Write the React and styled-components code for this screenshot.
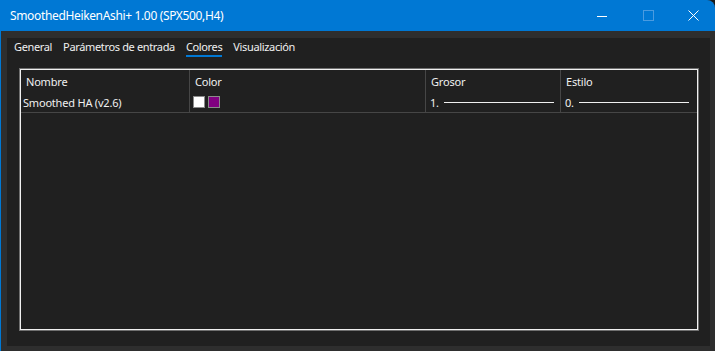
import styled, { createGlobalStyle } from 'styled-components';

const GlobalStyle = createGlobalStyle`
    html, body {
        margin: 0;
        padding: 0;
        background: #1a1a1a;
        font-family: 'Noto Sans', 'Open Sans', sans-serif;
    }
    * {
        box-sizing: border-box;
    }
`;

const Window = styled.div`
    width: 715px;
    height: 351px;
    display: flex;
    flex-direction: column;
    background: #2e2e2e;
    border-left: 1px solid #0078d4;
    border-top-right-radius: 8px;
    overflow: hidden;
`;
const TitleBar = styled.div`
    height: 31px;
    flex: 0 0 31px;
    display: flex;
    align-items: center;
    background: #0078d4;
    color: #ffffff;
`;
const Title = styled.div`
    flex: 1;
    padding-left: 9px;
    font-size: 12px;
    letter-spacing: -0.35px;
`;
const WinButton = styled.div`
    width: ${(p) => p.$w || 46}px;
    height: 31px;
    display: flex;
    align-items: center;
    justify-content: center;
`;
const Frame = styled.div`
    flex: 1;
    padding: 7px 5px 5px 6px;
    display: flex;
`;
const Panel = styled.div`
    flex: 1;
    display: flex;
    flex-direction: column;
    background: #202020;
    padding: 0 11px 15px 12px;
`;
const Tabs = styled.div`
    display: flex;
    gap: 11px;
    height: 19px;
    margin-left: -5px;
`;
const Tab = styled.div`
    font-size: 11px;
    line-height: 16px;
    padding-top: 1px;
    letter-spacing: -0.35px;
    color: #f0f0f0;
    border-bottom: 2px solid ${(p) => (p.$active ? '#0078d4' : 'transparent')};
    height: 19px;
    white-space: nowrap;
`;
const Grid = styled.div`
    flex: 1;
    margin: 12px 1px 1px 1px;
    border: 1px solid #f0f0f0;
    box-shadow: 0 0 0 1px #707070;
    display: flex;
    flex-direction: column;
`;
const Row = styled.div`
    display: grid;
    grid-template-columns: 169px 236px 135px 1fr;
    height: ${(p) => p.$h}px;
    border-bottom: ${(p) => (p.$line ? '1px solid #464646' : 'none')};
`;
const Cell = styled.div`
    display: flex;
    align-items: center;
    gap: ${(p) => p.$gap || 0}px;
    padding-left: ${(p) => p.$pad}px;
    border-right: ${(p) => (p.$last ? 'none' : '1px solid #464646')};
    font-size: 11px;
    letter-spacing: -0.2px;
    color: #f0f0f0;
    white-space: nowrap;
`;
const Swatch = styled.span`
    width: 12px;
    height: 12px;
    border: 1px solid #8a8a8a;
    background: ${(p) => p.$color};
`;
const LineSample = styled.span`
    width: 110px;
    height: 1px;
    background: #f0f0f0;
    margin-left: 5px;
    margin-top: 1px;
`;

function App() {
    return (
        <>
            <GlobalStyle />
            <Window>
                <TitleBar>
                    <Title>SmoothedHeikenAshi+ 1.00 (SPX500,H4)</Title>
                    <WinButton>
                        <svg width="10" height="10" viewBox="0 0 10 10">
                            <path d="M0 5.5H10" stroke="#fff" strokeWidth="1" />
                        </svg>
                    </WinButton>
                    <WinButton>
                        <svg width="11" height="11" viewBox="0 0 11 11">
                            <rect x="0.5" y="0.5" width="10" height="10" fill="none" stroke="#4a9be0" strokeWidth="1" />
                        </svg>
                    </WinButton>
                    <WinButton $w={44}>
                        <svg width="11" height="11" viewBox="0 0 11 11">
                            <path d="M0.5 0.5L10.5 10.5M10.5 0.5L0.5 10.5" stroke="#fff" strokeWidth="1" />
                        </svg>
                    </WinButton>
                </TitleBar>
                <Frame>
                    <Panel>
                        <Tabs>
                            <Tab>General</Tab>
                            <Tab>Parámetros de entrada</Tab>
                            <Tab $active>Colores</Tab>
                            <Tab>Visualización</Tab>
                        </Tabs>
                        <Grid>
                            <Row $h={22}>
                                <Cell $pad={5}>Nombre</Cell>
                                <Cell $pad={5}>Color</Cell>
                                <Cell $pad={5}>Grosor</Cell>
                                <Cell $pad={5} $last>Estilo</Cell>
                            </Row>
                            <Row $h={21} $line>
                                <Cell $pad={2}>Smoothed HA (v2.6)</Cell>
                                <Cell $pad={3} $gap={3}>
                                    <Swatch $color="#ffffff" />
                                    <Swatch $color="#800080" />
                                </Cell>
                                <Cell $pad={4}>
                                    1.
                                    <LineSample />
                                </Cell>
                                <Cell $pad={4} $last>
                                    0.
                                    <LineSample />
                                </Cell>
                            </Row>
                        </Grid>
                    </Panel>
                </Frame>
            </Window>
        </>
    );
}

export default App;
